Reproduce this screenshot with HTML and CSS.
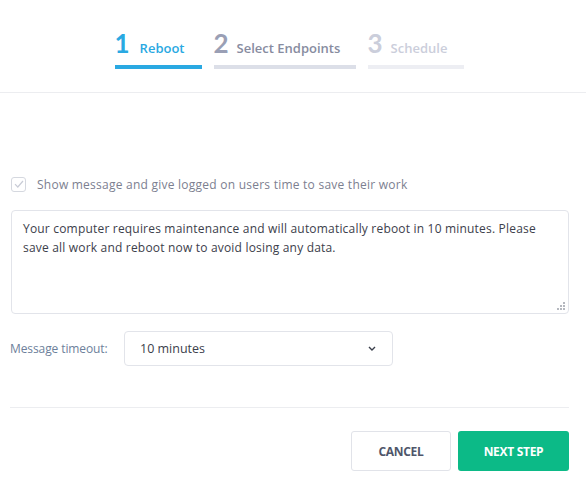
FILE: index.html
```html
<!DOCTYPE html>
<html>
<head>
<meta charset="utf-8">
<link rel="stylesheet" href="styles.css">
</head>
<body>
<header class="header">
  <div class="steps">
    <div class="step step-active step-1">
      <div class="step-head"><span class="num">1</span><span class="label">Reboot</span></div>
      <div class="bar"></div>
    </div>
    <div class="step step-next step-2">
      <div class="step-head"><span class="num">2</span><span class="label">Select Endpoints</span></div>
      <div class="bar"></div>
    </div>
    <div class="step step-later step-3">
      <div class="step-head"><span class="num">3</span><span class="label">Schedule</span></div>
      <div class="bar"></div>
    </div>
  </div>
</header>
<main class="content">
  <label class="check-row">
    <span class="checkbox">
      <svg width="10" height="8" viewBox="0 0 10 8"><path d="M1 4.2 L3.8 7 L9 1" fill="none" stroke="#c9ccd6" stroke-width="1.2"/></svg>
    </span>
    <span class="check-text">Show message and give logged on users time to save their work</span>
  </label>
  <div class="textarea">
    <p>Your computer requires maintenance and will automatically reboot in 10 minutes. Please save all work and reboot now to avoid losing any data.</p>
    <svg class="grip" width="8" height="8" viewBox="0 0 8 8"><g fill="#b5b8bf"><rect x="6" y="0" width="2" height="2"/><rect x="3" y="3" width="2" height="2"/><rect x="6" y="3" width="2" height="2"/><rect x="0" y="6" width="2" height="2"/><rect x="3" y="6" width="2" height="2"/><rect x="6" y="6" width="2" height="2"/></g></svg>
  </div>
  <div class="timeout-row">
    <span class="timeout-label">Message timeout:</span>
    <div class="select">
      <span>10 minutes</span>
      <svg width="8" height="5" viewBox="0 0 8 5"><path d="M1 1 L4 4 L7 1" fill="none" stroke="#3a3f4b" stroke-width="1.4"/></svg>
    </div>
  </div>
  <hr class="divider">
  <div class="actions">
    <button class="btn btn-cancel">CANCEL</button>
    <button class="btn btn-next">NEXT STEP</button>
  </div>
</main>
</body>
</html>
```
FILE: styles.css
```css
* { box-sizing: border-box; }
html, body { margin: 0; padding: 0; background: #fff; }
body {
  font-family: "Open Sans", "Noto Sans", sans-serif;
  width: 586px;
  height: 484px;
  overflow: hidden;
}
.header {
  height: 93px;
  border-bottom: 1px solid #ecedf0;
  display: flex;
  justify-content: center;
  padding-top: 29px;
}
.steps {
  display: flex;
  gap: 12px;
  margin-left: -8px;
}
.step-1 { width: 87px; }
.step-2 { width: 142px; }
.step-3 { width: 96px; }
.step-head {
  display: flex;
  align-items: baseline;
  height: 28px;
}
.num {
  font-family: "Lato", sans-serif;
  font-size: 26px;
  font-weight: 700;
  line-height: 28px;
  margin-right: 8px;
}
.step-1 .num { margin-right: 10px; }
.label {
  font-size: 13px;
  font-weight: 600;
  letter-spacing: 0;
}
.bar {
  height: 4px;
  margin-top: 8px;
}
.step-active .num, .step-active .label { color: #2aa9e2; }
.step-active .bar { background: #2aa9e2; }
.step-next .num { color: #9a9fb5; }
.step-next .label { color: #878c9f; }
.step-next .bar { background: #dcdfe8; }
.step-later .num, .step-later .label { color: #cbcedb; }
.step-later .bar { background: #edeef3; }

.content {
  padding: 82px 17px 0 10px;
}
.check-row {
  display: flex;
  align-items: center;
  gap: 11px;
  padding-left: 1px;
  height: 18px;
}
.checkbox {
  width: 15px;
  height: 15px;
  border: 1px solid #d5d8df;
  border-radius: 3px;
  display: flex;
  align-items: center;
  justify-content: center;
}
.check-text {
  font-size: 12px;
  color: #7c8090;
  letter-spacing: 0.24px;
}
.textarea {
  position: relative;
  margin: 17px 0 0 1px;
  height: 104px;
  border: 1px solid #e2e4ea;
  border-radius: 4px;
  padding: 8px 11px;
}
.textarea p {
  margin: 0;
  font-size: 12px;
  line-height: 19px;
  color: #3c404b;
  letter-spacing: 0.19px;
}
.grip {
  position: absolute;
  right: 3px;
  bottom: 3px;
}
.timeout-row {
  display: flex;
  align-items: center;
  margin-top: 17px;
}
.timeout-label {
  width: 114px;
  font-size: 12px;
  color: #6d7f9b;
  letter-spacing: -0.1px;
}
.select {
  width: 269px;
  height: 35px;
  border: 1px solid #e2e4ea;
  border-radius: 4px;
  display: flex;
  align-items: center;
  justify-content: space-between;
  padding: 0 16px 0 15px;
  font-size: 12.5px;
  color: #3c404b;
}
.divider {
  border: 0;
  border-top: 1px solid #ecedf0;
  margin: 41px 0 0 0;
}
.actions {
  display: flex;
  justify-content: flex-end;
  gap: 7px;
  margin-top: 23px;
}
.btn {
  height: 40px;
  border-radius: 3px;
  font-family: "Open Sans", sans-serif;
  font-size: 12px;
  font-weight: 700;
  letter-spacing: -0.3px;
}
.btn-cancel {
  width: 100px;
  background: #fff;
  border: 1px solid #e1e3e9;
  color: #4f566a;
}
.btn-next {
  width: 111px;
  background: #0cba87;
  border: 0;
  color: #fff;
}
```
